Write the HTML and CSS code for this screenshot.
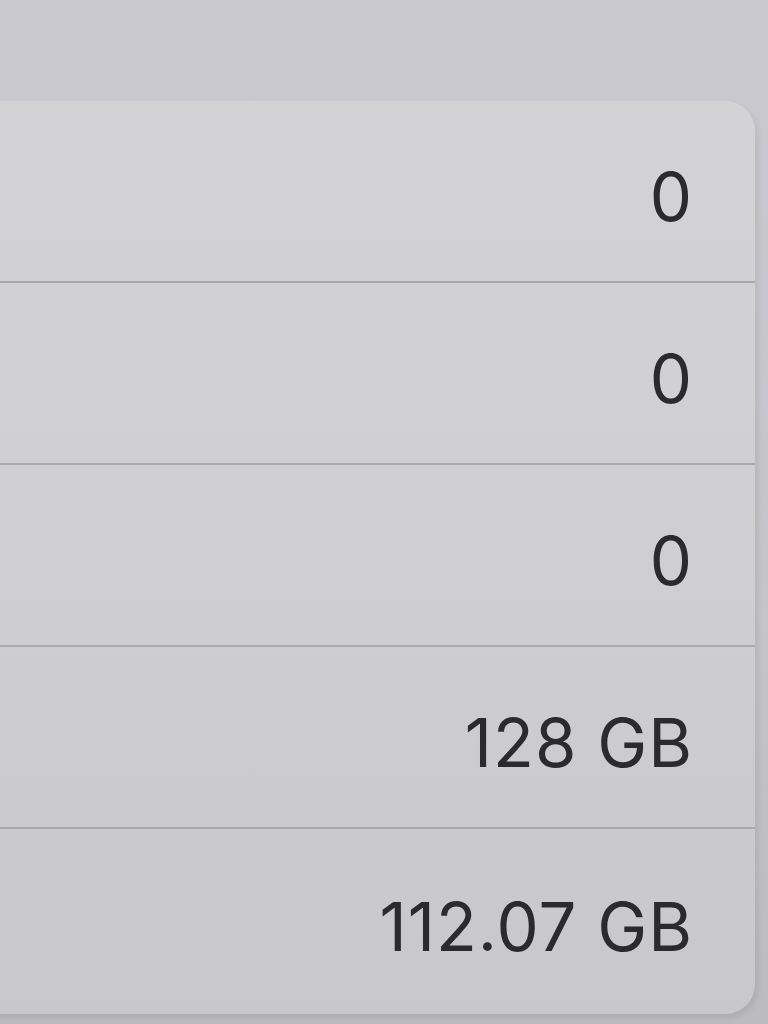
FILE: index.html
```html
<!DOCTYPE html>
<html lang="en">
<head>
    <meta charset="UTF-8">
    <meta name="viewport" content="width=device-width, initial-scale=1.0">
    <title>Storage</title>
    <link rel="stylesheet" href="styles.css">
</head>
<body>
    <div class="screen">
        <div class="card">
            <div class="row"><span class="value">0</span></div>
            <div class="row"><span class="value">0</span></div>
            <div class="row"><span class="value">0</span></div>
            <div class="row"><span class="value">128 GB</span></div>
            <div class="row"><span class="value">112.07 GB</span></div>
        </div>
    </div>
</body>
</html>
```

FILE: styles.css
```css
html, body { margin: 0; height: 100%; }
body { font-family: Inter, "Noto Sans", sans-serif; background: linear-gradient(180deg, #c9c9cf 0%, #c4c4c9 60%, #bcbcc0 100%); overflow: hidden; }
.screen { padding-top: 101px; }
.card { width: 785px; margin-left: -30px; background: linear-gradient(180deg, #d3d3d5 0%, #cfcfd1 50%, #c8c8ca 100%); border-radius: 30px; box-shadow: 3px 4px 6px rgba(0, 0, 0, 0.08); }
.row { height: 182px; display: flex; align-items: center; justify-content: flex-end; padding-right: 62px; border-bottom: 2px solid #a9a9ad; box-sizing: border-box; }
.row:last-child { border-bottom: none; height: 185px; }
.value { font-size: 67px; color: #2b2b2f; letter-spacing: 1px; padding-top: 10px; }
```
